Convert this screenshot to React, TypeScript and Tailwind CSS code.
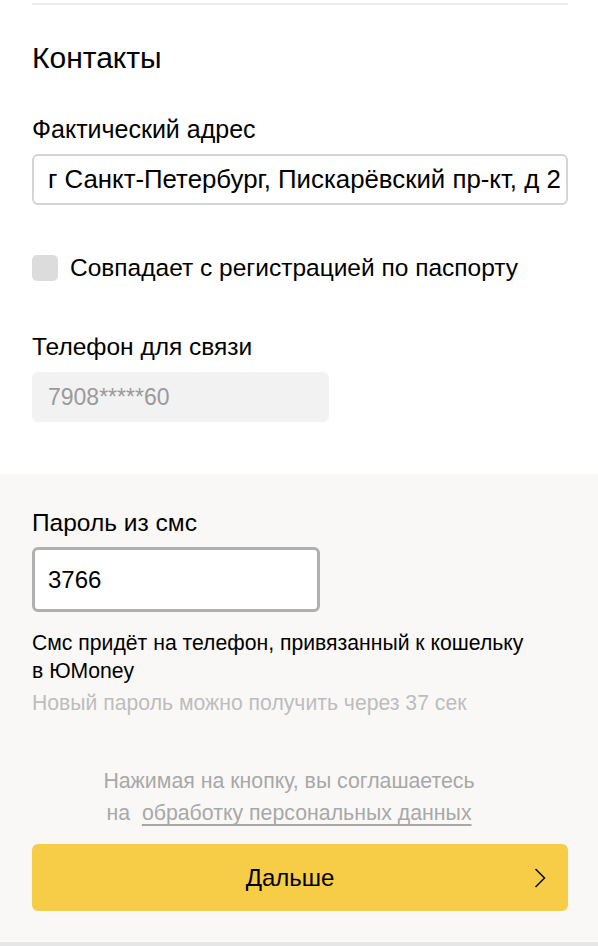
import React from "react";

export default function App() {
  return (
    <div className="w-[598px] bg-white text-black" style={{ fontFamily: '"Liberation Sans", Arial, sans-serif' }}>
      <div className="pl-8 pr-[30px] pt-[3px] pb-[52px]">
        <div className="h-[2px] bg-[#ececec]" />
        <h2 className="mt-[36px] text-[30px] leading-[34px] font-normal">Контакты</h2>
        <div className="mt-[41px] text-[25px] leading-[26px]">Фактический адрес</div>
        <div className="mt-[12px] h-[51px] rounded-[6px] border-2 border-[#d4d4d4] bg-white flex items-center pl-[14px] pr-[4px] text-[25.8px] whitespace-nowrap overflow-hidden">
          г Санкт-Петербург, Пискарёвский пр-кт, д 2
        </div>
        <div className="mt-[50px] flex items-center gap-[12px]">
          <div className="w-[26px] h-[26px] rounded-[5px] bg-[#dcdcdc]" />
          <span className="text-[24.5px] leading-[26px]">Совпадает с регистрацией по паспорту</span>
        </div>
        <div className="mt-[53px] text-[24.5px] leading-[26px]">Телефон для связи</div>
        <div className="mt-[12px] w-[297px] h-[50px] rounded-[6px] bg-[#f2f2f2] flex items-center px-[16px] text-[23px] text-[#9a9a9a]">
          7908*****60
        </div>
      </div>
      <div className="bg-[#f9f8f7] pl-8 pr-[30px] pt-[36px] pb-[31px]">
        <div className="text-[24.5px] leading-[26px]">Пароль из смс</div>
        <div className="mt-[11px] w-[288px] h-[65px] rounded-[6px] border-[3px] border-[#b0b0b0] bg-white flex items-center px-[13px] text-[24px]">
          3766
        </div>
        <div className="mt-[17px] text-[21.2px] leading-[28px]">
          Смс придёт на телефон, привязанный к кошельку
          <br />в ЮMoney
        </div>
        <div className="mt-[4px] text-[21.2px] leading-[28px] text-[#bdbdbd]">Новый пароль можно получить через 37 сек</div>
        <div className="mt-[48px] pr-[22px] text-center text-[21.3px] leading-[32px] text-[#a8a8a8]">
          Нажимая на кнопку, вы соглашаетесь
          <br />
          на&nbsp; <span className="underline underline-offset-[4px]">обработку персональных данных</span>
        </div>
        <button className="mt-[15px] w-full h-[67px] rounded-[6px] bg-[#f7cc46] relative flex items-center justify-center pr-[20px] text-[24px] text-black">
          Дальше
          <svg className="absolute right-[22px] top-1/2 -translate-y-1/2" width="12" height="20" viewBox="0 0 12 20" fill="none">
            <path d="M1.5 1l9 9-9 9" stroke="#111" strokeWidth="1.6" />
          </svg>
        </button>
      </div>
      <div className="h-[4px] bg-[#e6e6e6]" />
    </div>
  );
}
